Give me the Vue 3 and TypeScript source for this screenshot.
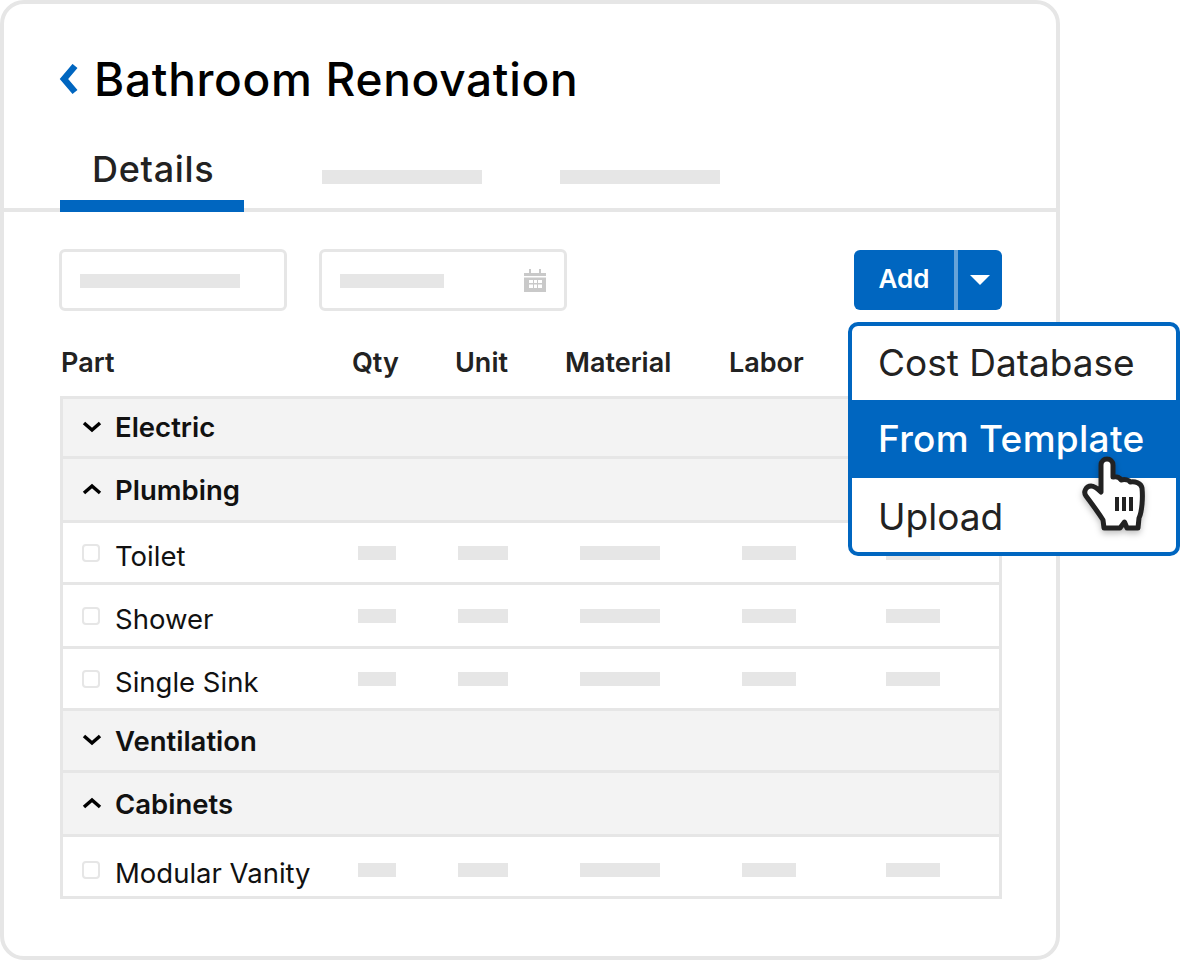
<script setup lang="ts">
interface Row {
  name: string
  group: boolean
  open?: boolean
  h: number
}

const rows: Row[] = [
  { name: 'Electric', group: true, open: false, h: 60 },
  { name: 'Plumbing', group: true, open: true, h: 64 },
  { name: 'Toilet', group: false, h: 62 },
  { name: 'Shower', group: false, h: 64 },
  { name: 'Single Sink', group: false, h: 62 },
  { name: 'Ventilation', group: true, open: false, h: 62 },
  { name: 'Cabinets', group: true, open: true, h: 64 },
  { name: 'Modular Vanity', group: false, h: 62 },
]

const columnas = ['Qty', 'Unit', 'Material', 'Labor']
const barras = [38, 50, 80, 54, 54]
</script>

<template>
  <div class="pagina">
    <div class="tarjeta">
      <div class="titulo">
        <svg class="volver" width="20" height="32" viewBox="0 0 20 32">
          <path d="M17 2 L6 15 L17 28" fill="none" stroke="#0066c0" stroke-width="6.500" />
        </svg>
        <h1>Bathroom Renovation</h1>
      </div>

      <div class="tabs">
        <div class="tab">Details</div>
        <span class="barra-tab"></span>
        <span class="barra-tab"></span>
      </div>

      <div class="toolbar">
        <div class="campo campo-a"><span class="barra-campo ancho-a"></span></div>
        <div class="campo campo-b">
          <span class="barra-campo ancho-b"></span>
          <svg class="calendario" width="24" height="26" viewBox="0 0 24 26">
            <path d="M1 6 H23 V9 H1 Z M6 2 H8 V6 H6 Z M16 2 H18 V6 H16 Z" fill="#c9c9c9" />
            <path fill-rule="evenodd" fill="#c9c9c9" d="M1 10.5 H23 V25 H1 Z M6 13 V16 H10 V13 Z M11 13 V16 H14 V13 Z M15 13 V16 H19 V13 Z M6 17.5 V21 H10 V17.5 Z M11 17.5 V21 H14 V17.5 Z M15 17.5 V21 H19 V17.5 Z" />
          </svg>
        </div>

        <div class="add">
          <span class="add-texto">Add</span>
          <span class="add-flecha"><i></i></span>

          <div class="menu">
            <div class="opcion">Cost Database</div>
            <div class="opcion activa">From Template</div>
            <div class="opcion">Upload</div>
            <svg class="mano" width="100" height="90" viewBox="0 0 100 90">
              <defs>
                <filter id="sombra" x="-30%" y="-30%" width="160%" height="160%">
                  <feDropShadow dx="0" dy="3" stdDeviation="3" flood-color="#000" flood-opacity="0.25" />
                </filter>
              </defs>
              <path
                d="M41 15 C41 7 53 7 53 15 L53 27 C57 26 60 28 61 30 C65 29 69 30 70 32 C75 31 81 33 82 38 C83 48 82 62 79 68 L78 78 L67 78 L64.500 72 L60 78 L44 78 L43 70 C38 62 32 54 26 46 C23 42 26 36 31 36 C35 36 38 39 41 42 Z"
                fill="#fff"
                stroke="#222"
                stroke-width="5"
                stroke-linejoin="round"
                filter="url(#sombra)"
              />
              <path d="M55 47 H59 V61 H55 Z M62 47 H66 V61 H62 Z M69 47 H73 V61 H69 Z" fill="#222" />
            </svg>
          </div>
        </div>
      </div>

      <div class="cabecera">
        <span>Part</span>
        <span v-for="c in columnas" :key="c">{{ c }}</span>
      </div>

      <div class="tabla">
        <div
          v-for="r in rows"
          :key="r.name"
          class="fila"
          :class="{ grupo: r.group }"
          :style="{ height: r.h + 'px' }"
        >
          <template v-if="r.group">
            <svg class="flecha" width="20" height="14" viewBox="0 0 20 14">
              <path :d="r.open ? 'M2 11 L10 4 L18 11' : 'M2 3 L10 10 L18 3'" fill="none" stroke="#000" stroke-width="3.500" />
            </svg>
            <span class="nombre">{{ r.name }}</span>
          </template>
          <template v-else>
            <span class="check"></span>
            <span class="nombre">{{ r.name }}</span>
            <div class="celdas">
              <div v-for="(b, i) in barras" :key="i" class="celda">
                <span class="barra" :style="{ width: b + 'px' }"></span>
              </div>
            </div>
          </template>
        </div>
      </div>
    </div>
  </div>
</template>

<style>
body {
  background: #fff;
}
</style>

<style scoped>
* {
  box-sizing: border-box;
}

.pagina {
  position: relative;
  width: 1180px;
  height: 960px;
  overflow: hidden;
  font-family: Inter, "Liberation Sans", sans-serif;
  color: #222;
}

.tarjeta {
  width: 1060px;
  height: 960px;
  border: 4px solid #e6e6e6;
  border-radius: 24px;
  background: #fff;
}

.titulo {
  display: flex;
  align-items: center;
  height: 52px;
  margin-top: 50px;
  padding-left: 54px;
}

.volver {
  flex: none;
}

h1 {
  margin: -2px 0 0 16px;
  font-size: 46px;
  font-weight: 500;
  line-height: 52px;
  letter-spacing: 0.7px;
  color: #000;
}

.tabs {
  display: flex;
  align-items: flex-start;
  height: 106px;
  padding-left: 56px;
  border-bottom: 4px solid #e6e6e6;
}

.tab {
  width: 184px;
  height: 106px;
  padding: 41px 0 0 32px;
  border-bottom: 12px solid #0066c0;
  font-size: 36px;
  font-weight: 500;
  line-height: 44px;
  letter-spacing: 0.7px;
}

.barra-tab {
  width: 160px;
  height: 14px;
  margin-top: 64px;
  background: #e6e6e6;
}

.tab + .barra-tab {
  margin-left: 78px;
}

.barra-tab + .barra-tab {
  margin-left: 78px;
}

.toolbar {
  display: flex;
  align-items: flex-start;
  margin-top: 37px;
  padding: 0 54px 0 55px;
}

.campo {
  display: flex;
  align-items: center;
  justify-content: space-between;
  height: 62px;
  padding: 0 18px;
  border: 3px solid #e6e6e6;
  border-radius: 6px;
}

.campo-a {
  width: 228px;
}

.campo-b {
  width: 248px;
  margin-left: 32px;
}

.barra-campo {
  height: 14px;
  margin-top: 2px;
  background: #e6e6e6;
}

.ancho-a {
  width: 160px;
}

.ancho-b {
  width: 104px;
}

.calendario {
  flex: none;
  margin-right: -1px;
}

.add {
  position: relative;
  display: flex;
  width: 148px;
  height: 60px;
  margin-top: 1px;
  margin-left: auto;
  border-radius: 6px;
  background: #0066c0;
  color: #fff;
}

.add-texto {
  width: 100px;
  font-size: 26px;
  font-weight: 600;
  line-height: 58px;
  text-align: center;
}

.add-flecha {
  display: flex;
  flex: 1;
  align-items: center;
  justify-content: center;
  border-left: 4px solid #66a3d9;
}

.add-flecha i {
  width: 0;
  height: 0;
  border-top: 10px solid #fff;
  border-right: 10px solid transparent;
  border-left: 10px solid transparent;
}

.menu {
  position: absolute;
  top: 72px;
  left: -6px;
  z-index: 2;
  width: 332px;
  height: 234px;
  border: 4px solid #0066c0;
  border-radius: 10px;
  background: #fff;
  color: #222;
}

.opcion {
  height: 74px;
  padding-left: 26px;
  font-size: 37px;
  line-height: 74px;
}

.opcion:nth-child(3) {
  line-height: 78px;
}

.opcion.activa {
  height: 78px;
  background: #0066c0;
  color: #fff;
  font-weight: 500;
  letter-spacing: 0.3px;
  line-height: 78px;
}

.mano {
  position: absolute;
  top: 124px;
  left: 208px;
  overflow: visible;
}

.cabecera {
  display: grid;
  grid-template-columns: 291px 103px 110px 164px 1fr;
  align-items: center;
  height: 85px;
  padding-top: 18px;
  padding-left: 57px;
  font-size: 27px;
  font-weight: 600;
  color: #222;
}

.tabla {
  width: 942px;
  margin-left: 56px;
  border: 3px solid #e6e6e6;
  border-bottom: 0;
}

.fila {
  display: flex;
  align-items: center;
  padding-left: 19px;
  border-bottom: 3px solid #e6e6e6;
}

.fila:last-child {
  padding-top: 6px;
}

.grupo {
  background: #f3f3f3;
}

.flecha {
  flex: none;
  margin-top: -2px;
}

.nombre {
  margin-left: 14px;
  font-size: 27.5px;
  color: #111;
}

.grupo .nombre {
  font-weight: 600;
  margin-top: 1px;
  margin-left: 13px;
}

.fila:first-child .nombre {
  margin-top: -1px;
}

.check {
  flex: none;
  width: 18px;
  height: 18px;
  border: 2px solid #e6e6e6;
  border-radius: 4px;
}

.fila:not(.grupo) .nombre {
  width: 243px;
  margin-left: 15px;
  margin-top: 7px;
}

.celdas {
  display: grid;
  grid-template-columns: 100px 122px 162px 144px 54px;
}

.celda {
  display: flex;
}

.barra {
  display: block;
  height: 14px;
  background: #e6e6e6;
}
</style>
